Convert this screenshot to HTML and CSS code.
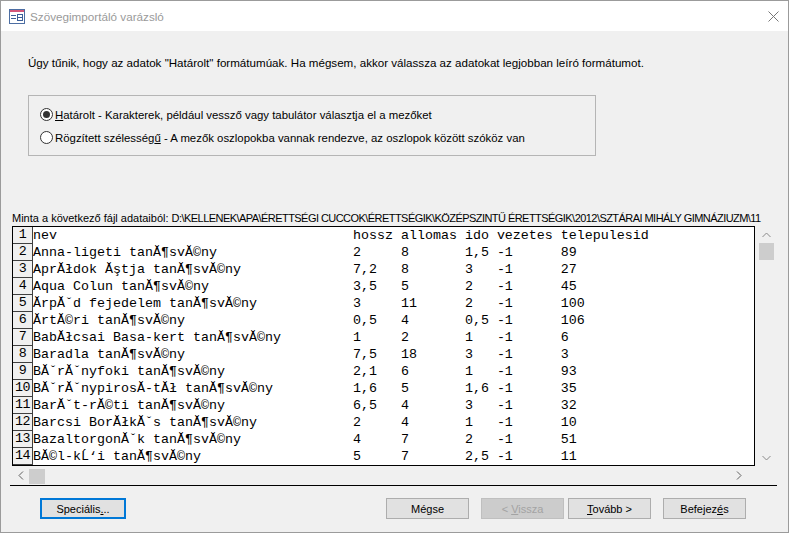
FILE: index.html
```html
<!DOCTYPE html>
<html lang="hu">
<head>
<meta charset="utf-8">
<title>Szövegimportáló varázsló</title>
<link rel="stylesheet" href="styles.css">
</head>
<body>
<div class="window">
  <div class="titlebar">
    <svg class="app-icon" width="16" height="15" viewBox="0 0 16 15">
      <rect x="0.5" y="0.5" width="15" height="14" fill="#ffffff" stroke="#4d6ea3"/>
      <rect x="1" y="1" width="14" height="2" fill="#d4577a"/>
      <line x1="2" y1="6.5" x2="7" y2="6.5" stroke="#3d5f99"/>
      <line x1="2" y1="9.5" x2="7" y2="9.5" stroke="#3d5f99"/>
      <rect x="8.5" y="5.5" width="5" height="6" fill="none" stroke="#3d5f99"/>
      <line x1="9" y1="8.5" x2="13" y2="8.5" stroke="#3d5f99"/>
    </svg>
    <span class="title">Szövegimportáló varázsló</span>
    <svg class="close" width="11" height="11" viewBox="0 0 11 11">
      <path d="M0.5 0.5 L10.5 10.5 M10.5 0.5 L0.5 10.5" stroke="#777" stroke-width="1" fill="none"/>
    </svg>
  </div>
  <div class="body">
    <p class="intro">Úgy tűnik, hogy az adatok "Határolt" formátumúak. Ha mégsem, akkor válassza az adatokat legjobban leíró formátumot.</p>
    <div class="group">
      <div class="radio-row"><span class="radio checked"></span><span class="radio-text"><u>H</u>atárolt - Karakterek, például vessző vagy tabulátor választja el a mezőket</span></div>
      <div class="radio-row"><span class="radio"></span><span class="radio-text">Rögzített szélesség<u>ű</u> - A mezők oszlopokba vannak rendezve, az oszlopok között szóköz van</span></div>
    </div>
    <div class="sample-label">Minta a következő fájl adataiból: <span class="path">D:\KELLENEK\APA\ÉRETTSÉGI CUCCOK\ÉRETTSÉGIK\KÖZÉPSZINTŰ ÉRETTSÉGIK\2012\SZTÁRAI MIHÁLY GIMNÁZIUZM\11</span></div>
    <div class="preview">
      <div class="preview-main">
        <div class="grid">
          <div class="row"><span class="num">1</span><span class="c-name">nev</span><span class="c-h">hossz</span><span class="c-a">allomas</span><span class="c-i">ido</span><span class="c-v">vezetes</span><span class="c-t">telepulesid</span></div>
          <div class="row"><span class="num">2</span><span class="c-name">Anna-ligeti tanĂ¶svĂ©ny</span><span class="c-h">2</span><span class="c-a">8</span><span class="c-i">1,5</span><span class="c-v">-1</span><span class="c-t">89</span></div>
          <div class="row"><span class="num">3</span><span class="c-name">AprĂłdok Ăştja tanĂ¶svĂ©ny</span><span class="c-h">7,2</span><span class="c-a">8</span><span class="c-i">3</span><span class="c-v">-1</span><span class="c-t">27</span></div>
          <div class="row"><span class="num">4</span><span class="c-name">Aqua Colun tanĂ¶svĂ©ny</span><span class="c-h">3,5</span><span class="c-a">5</span><span class="c-i">2</span><span class="c-v">-1</span><span class="c-t">45</span></div>
          <div class="row"><span class="num">5</span><span class="c-name">ĂrpĂˇd fejedelem tanĂ¶svĂ©ny</span><span class="c-h">3</span><span class="c-a">11</span><span class="c-i">2</span><span class="c-v">-1</span><span class="c-t">100</span></div>
          <div class="row"><span class="num">6</span><span class="c-name">ĂrtĂ©ri tanĂ¶svĂ©ny</span><span class="c-h">0,5</span><span class="c-a">4</span><span class="c-i">0,5</span><span class="c-v">-1</span><span class="c-t">106</span></div>
          <div class="row"><span class="num">7</span><span class="c-name">BabĂłcsai Basa-kert tanĂ¶svĂ©ny</span><span class="c-h">1</span><span class="c-a">2</span><span class="c-i">1</span><span class="c-v">-1</span><span class="c-t">6</span></div>
          <div class="row"><span class="num">8</span><span class="c-name">Baradla tanĂ¶svĂ©ny</span><span class="c-h">7,5</span><span class="c-a">18</span><span class="c-i">3</span><span class="c-v">-1</span><span class="c-t">3</span></div>
          <div class="row"><span class="num">9</span><span class="c-name">BĂˇrĂˇnyfoki tanĂ¶svĂ©ny</span><span class="c-h">2,1</span><span class="c-a">6</span><span class="c-i">1</span><span class="c-v">-1</span><span class="c-t">93</span></div>
          <div class="row"><span class="num">10</span><span class="c-name">BĂˇrĂˇnypirosĂ-tĂł tanĂ¶svĂ©ny</span><span class="c-h">1,6</span><span class="c-a">5</span><span class="c-i">1,6</span><span class="c-v">-1</span><span class="c-t">35</span></div>
          <div class="row"><span class="num">11</span><span class="c-name">BarĂˇt-rĂ©ti tanĂ¶svĂ©ny</span><span class="c-h">6,5</span><span class="c-a">4</span><span class="c-i">3</span><span class="c-v">-1</span><span class="c-t">32</span></div>
          <div class="row"><span class="num">12</span><span class="c-name">Barcsi BorĂłkĂˇs tanĂ¶svĂ©ny</span><span class="c-h">2</span><span class="c-a">4</span><span class="c-i">1</span><span class="c-v">-1</span><span class="c-t">10</span></div>
          <div class="row"><span class="num">13</span><span class="c-name">BazaltorgonĂˇk tanĂ¶svĂ©ny</span><span class="c-h">4</span><span class="c-a">7</span><span class="c-i">2</span><span class="c-v">-1</span><span class="c-t">51</span></div>
          <div class="row"><span class="num">14</span><span class="c-name">BĂ©l-kĹ‘i tanĂ¶svĂ©ny</span><span class="c-h">5</span><span class="c-a">7</span><span class="c-i">2,5</span><span class="c-v">-1</span><span class="c-t">11</span></div>
        </div>
        <div class="vscroll">
          <div class="sb-btn"><svg width="9" height="6" viewBox="0 0 9 6"><path d="M0.5 5 L4.5 1 L8.5 5" stroke="#8a8a8a" fill="none"/></svg></div>
          <div class="v-thumb"></div>
          <div class="sb-fill"></div>
          <div class="sb-btn"><svg width="9" height="6" viewBox="0 0 9 6"><path d="M0.5 1 L4.5 5 L8.5 1" stroke="#8a8a8a" fill="none"/></svg></div>
        </div>
      </div>
      <div class="hscroll">
        <div class="sb-btn"><svg width="6" height="9" viewBox="0 0 6 9"><path d="M5 0.5 L1 4.5 L5 8.5" stroke="#606060" fill="none"/></svg></div>
        <div class="h-thumb"></div>
        <div class="sb-fill"></div>
        <div class="sb-btn"><svg width="6" height="9" viewBox="0 0 6 9"><path d="M1 0.5 L5 4.5 L1 8.5" stroke="#606060" fill="none"/></svg></div>
      </div>
    </div>
    <div class="separator"></div>
    <div class="buttons">
      <button class="btn focused">Speciális<u>.</u>..</button>
      <button class="btn cancel">Mégse</button>
      <button class="btn disabled">&lt; <u>V</u>issza</button>
      <button class="btn next"><u>T</u>ovább &gt;</button>
      <button class="btn finish">Befejez<u>é</u>s</button>
    </div>
  </div>
</div>
</body>
</html>
```
FILE: styles.css
```css
* { box-sizing: border-box; }
html, body { margin: 0; padding: 0; }
body {
  width: 789px;
  height: 533px;
  overflow: hidden;
  background: #f0f0f0;
  font-family: "Liberation Sans", Arial, sans-serif;
  font-size: 11px;
  color: #000;
}
.window {
  width: 789px;
  height: 533px;
  border: 1px solid #9b9b9b;
  background: #f0f0f0;
  display: flex;
  flex-direction: column;
}
.titlebar {
  flex: none;
  height: 30px;
  background: #fff;
  display: flex;
  align-items: center;
  padding: 0 9px 0 8px;
}
.app-icon { flex: none; display: block; }
.title {
  margin-left: 5px;
  font-size: 11.7px;
  color: #9a9a9a;
}
.close { margin-left: auto; display: block; }
.body { flex: 1; display: flex; flex-direction: column; }
.intro {
  margin: 24px 0 0 27px;
  font-size: 11.6px;
  line-height: 15px;
  height: 15px;
  white-space: nowrap;
}
.group {
  margin: 25px 0 0 27px;
  width: 568px;
  height: 61px;
  border: 1px solid #b5b5b5;
  padding: 7px 0 0 11px;
}
.radio-row {
  display: flex;
  align-items: center;
  height: 23px;
}
.radio {
  flex: none;
  width: 13px;
  height: 13px;
  border: 1px solid #333;
  border-radius: 50%;
  background: #fff;
  display: flex;
  align-items: center;
  justify-content: center;
}
.radio.checked::after {
  content: "";
  width: 7px;
  height: 7px;
  border-radius: 50%;
  background: #333;
}
.radio-text { margin-left: 2px; white-space: nowrap; font-size: 11.4px; }
.sample-label {
  margin: 55px 0 0 11px;
  line-height: 14px;
  height: 14px;
  white-space: nowrap;
  overflow: hidden;
}
.path { letter-spacing: -0.55px; }
.preview { margin: 1px 0 0 11px; }
.preview-main { display: flex; gap: 3px; }
.grid {
  width: 743px;
  height: 240px;
  border: 1px solid #000;
  background: #fff;
  overflow: hidden;
  font-family: "Liberation Mono", "Courier New", monospace;
  font-size: 13.333px;
}
.row { display: flex; height: 17px; line-height: 17px; white-space: pre; }
.num {
  flex: none;
  width: 20px;
  height: 17px;
  line-height: 16px;
  background: #f0f0f0;
  border-right: 1px solid #404040;
  border-bottom: 1px solid #404040;
  text-align: center;
  letter-spacing: -0.5px;
}
.c-name { flex: none; width: 40ch; }
.c-h { flex: none; width: 6ch; }
.c-a { flex: none; width: 8ch; }
.c-i { flex: none; width: 4ch; }
.c-v { flex: none; width: 8ch; }
.c-t { flex: none; }
.vscroll {
  width: 17px;
  height: 240px;
  display: flex;
  flex-direction: column;
}
.sb-btn {
  flex: none;
  width: 17px;
  height: 17px;
  display: flex;
  align-items: center;
  justify-content: center;
}
.sb-btn svg { display: block; }
.v-thumb { flex: none; width: 15px; height: 17px; margin-left: 1px; background: #cdcdcd; }
.sb-fill { flex: 1; }
.hscroll {
  margin-top: 1px;
  width: 735px;
  height: 17px;
  display: flex;
}
.h-thumb { flex: none; width: 16px; height: 15px; margin-top: 2px; background: #cdcdcd; }
.separator {
  margin: 1px 0 0 9px;
  width: 767px;
  height: 1px;
  background: #000;
}
.buttons {
  margin-top: 12px;
  padding-left: 39px;
  display: flex;
}
.btn {
  height: 21px;
  width: 83px;
  padding: 0;
  font-family: "Liberation Sans", Arial, sans-serif;
  font-size: 11px;
  color: #000;
  background: #e1e1e1;
  border: 1px solid #adadad;
}
.btn.focused { width: 86px; border: 2px solid #0078d7; }
.btn.cancel { margin-left: 260px; }
.btn.disabled { margin-left: 12px; background: #cccccc; border-color: #bfbfbf; color: #a3a3a3; }
.btn.next { margin-left: 4px; }
.btn.finish { margin-left: 12px; }
```
